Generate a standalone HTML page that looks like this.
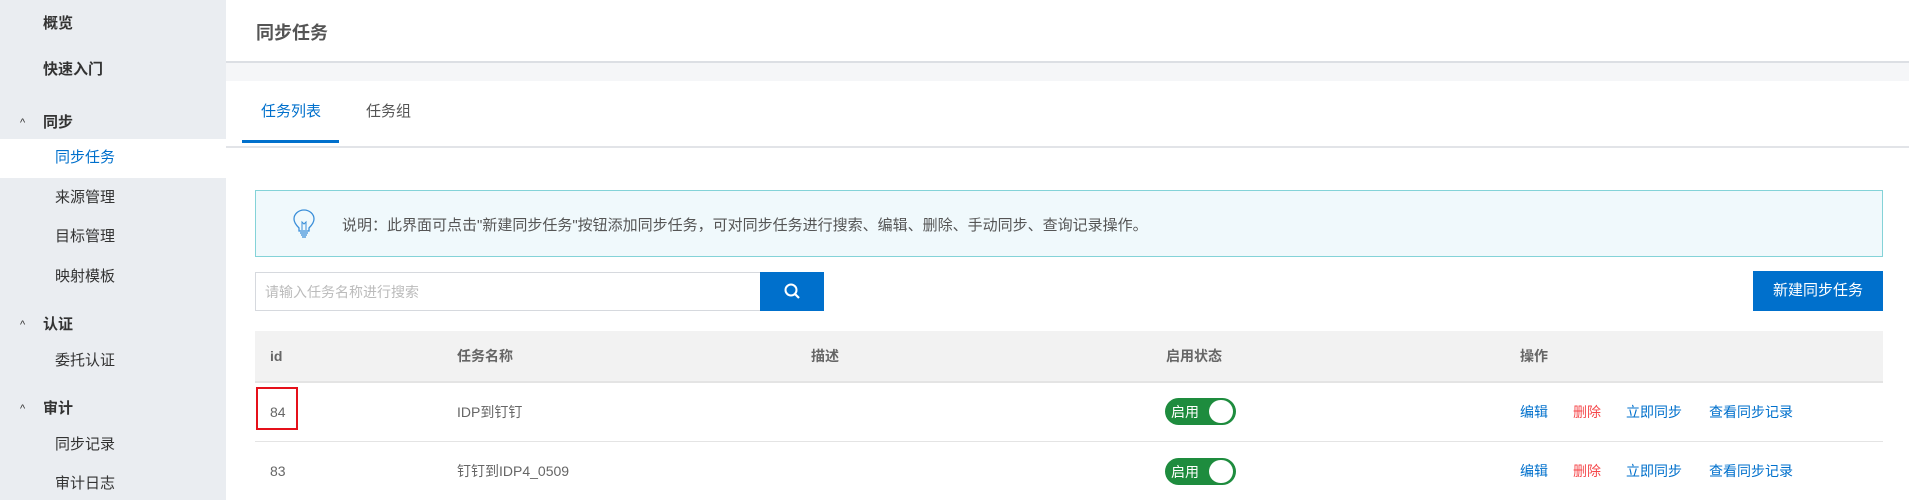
<!DOCTYPE html>
<html><head><meta charset="utf-8"><style>
*{margin:0;padding:0;box-sizing:border-box}
body{width:1909px;height:500px;overflow:hidden;background:#fff;font-family:"Liberation Sans","Noto Sans CJK SC",sans-serif;font-size:14px;color:#666;position:relative}
.a{position:absolute;white-space:nowrap}
#side{position:absolute;left:0;top:0;width:226px;height:500px;background:#eaedf1}
.p{position:absolute;left:43px;font-weight:bold;color:#333;font-size:15px;line-height:20px}
.c{position:absolute;left:20px;font-size:11px;color:#333;line-height:20px}
.s{position:absolute;left:55px;color:#333;line-height:20px;font-size:15px}
.t{position:absolute;line-height:20px}
</style></head><body>
<div id="side">
<div class="p" style="top:14px">概览</div>
<div class="p" style="top:60px">快速入门</div>
<div class="c" style="top:113px">^</div><div class="p" style="top:113px">同步</div>
<div style="position:absolute;left:0;top:139px;width:226px;height:39px;background:#fff"></div>
<div class="s" style="top:148px;color:#0070cc">同步任务</div>
<div class="s" style="top:188px">来源管理</div>
<div class="s" style="top:227px">目标管理</div>
<div class="s" style="top:267px">映射模板</div>
<div class="c" style="top:315px">^</div><div class="p" style="top:315px">认证</div>
<div class="s" style="top:351px">委托认证</div>
<div class="c" style="top:399px">^</div><div class="p" style="top:399px">审计</div>
<div class="s" style="top:435px">同步记录</div>
<div class="s" style="top:474px">审计日志</div>
</div>
<div class="a" style="left:226px;top:61px;width:1683px;height:2px;background:#dcdfe4"></div>
<div class="a" style="left:226px;top:63px;width:1683px;height:18px;background:#f5f6f8"></div>
<div class="a" style="left:256px;top:19px;font-size:18px;font-weight:bold;color:#555">同步任务</div>
<div class="a" style="left:261px;top:100px;color:#0070cc;font-size:15px">任务列表</div>
<div class="a" style="left:242px;top:140px;width:97px;height:3px;background:#0070cc"></div>
<div class="a" style="left:366px;top:100px;color:#555;font-size:15px">任务组</div>
<div class="a" style="left:226px;top:146px;width:1683px;height:2px;background:#e2e4e8"></div>

<div class="a" style="left:255px;top:190px;width:1628px;height:67px;background:#f0f9fc;border:1px solid #84d3d8"></div>
<svg class="a" style="left:292px;top:209px" width="24" height="30" viewBox="0 0 24 30"><path d="M7 19 C3 15 2 12 2 10 A10 9 0 0 1 22 10 C22 12 21 15 17 19 L17 22 L7 22 Z" fill="none" stroke="#3b8fd9" stroke-width="1.3"/><path d="M10 21 L10 13 L12 15 L14 13 L14 21" fill="none" stroke="#3b8fd9" stroke-width="1"/><path d="M8 24 H16 M9 26 H15 M10 28 H14" stroke="#3b8fd9" stroke-width="1.3"/></svg>
<div class="a" style="left:342px;top:214px;color:#555;font-size:15px">说明：此界面可点击"新建同步任务"按钮添加同步任务，可对同步任务进行搜索、编辑、删除、手动同步、查询记录操作。</div>

<div class="a" style="left:255px;top:272px;width:506px;height:39px;border:1px solid #d6d9de;border-right:none"></div>
<div class="a" style="left:265px;top:282px;color:#bbb">请输入任务名称进行搜索</div>
<div class="a" style="left:760px;top:272px;width:64px;height:39px;background:#0070cc"></div>
<svg class="a" style="left:783px;top:282px" width="20" height="20" viewBox="0 0 20 20"><circle cx="8" cy="8" r="5.5" fill="none" stroke="#fff" stroke-width="2"/><path d="M12 12 L16 16" stroke="#fff" stroke-width="2.2"/></svg>
<div class="a" style="left:1753px;top:271px;width:130px;height:40px;background:#0070cc;color:#fff;line-height:40px;text-align:center;font-size:15px">新建同步任务</div>

<div class="a" style="left:255px;top:331px;width:1628px;height:50px;background:#f2f2f2"></div>
<div class="a" style="left:255px;top:381px;width:1628px;height:2px;background:#e4e4e4"></div>
<div class="a" style="left:255px;top:441px;width:1628px;height:1px;background:#e4e4e4"></div>
<div class="t" style="left:270px;top:346px;font-weight:bold">id</div>
<div class="t" style="left:457px;top:346px;font-weight:bold">任务名称</div>
<div class="t" style="left:811px;top:346px;font-weight:bold">描述</div>
<div class="t" style="left:1166px;top:346px;font-weight:bold">启用状态</div>
<div class="t" style="left:1520px;top:346px;font-weight:bold">操作</div>

<div class="a" style="left:256px;top:387px;width:42px;height:43px;border:2px solid #e5101a"></div>
<div class="t" style="left:270px;top:402px">84</div>
<div class="t" style="left:457px;top:402px">IDP到钉钉</div>
<div class="t" style="left:270px;top:461px">83</div>
<div class="t" style="left:457px;top:461px">钉钉到IDP4_0509</div>

<div class="a" style="left:1165px;top:398px;width:71px;height:27px;border-radius:14px;background:#1e8c3e"></div>
<div class="a" style="left:1209px;top:400px;width:24px;height:23px;border-radius:12px;background:#fff"></div>
<div class="t" style="left:1171px;top:402px;color:#fff">启用</div>
<div class="a" style="left:1165px;top:458px;width:71px;height:27px;border-radius:14px;background:#1e8c3e"></div>
<div class="a" style="left:1209px;top:460px;width:24px;height:23px;border-radius:12px;background:#fff"></div>
<div class="t" style="left:1171px;top:462px;color:#fff">启用</div>

<div class="t" style="left:1520px;top:402px;color:#0070cc">编辑</div>
<div class="t" style="left:1573px;top:402px;color:#f5484b">删除</div>
<div class="t" style="left:1626px;top:402px;color:#0070cc">立即同步</div>
<div class="t" style="left:1709px;top:402px;color:#0070cc">查看同步记录</div>
<div class="t" style="left:1520px;top:461px;color:#0070cc">编辑</div>
<div class="t" style="left:1573px;top:461px;color:#f5484b">删除</div>
<div class="t" style="left:1626px;top:461px;color:#0070cc">立即同步</div>
<div class="t" style="left:1709px;top:461px;color:#0070cc">查看同步记录</div>
</body></html>
